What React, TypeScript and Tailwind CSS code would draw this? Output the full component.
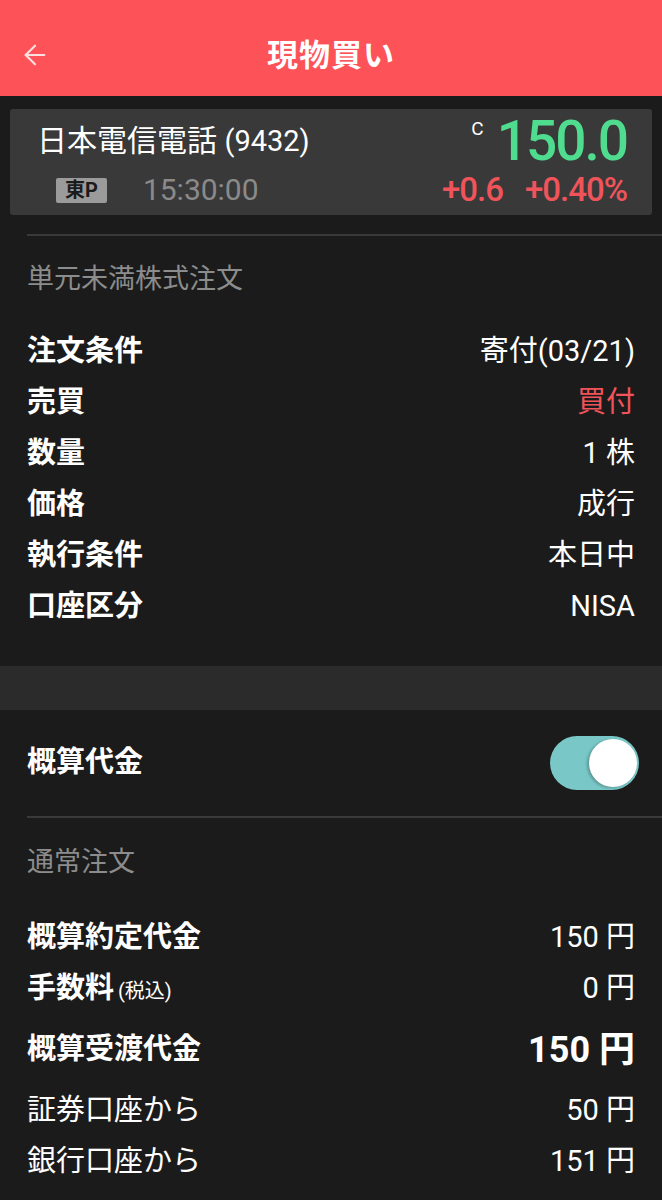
import { ArrowLeft } from 'lucide-react'

const font = { fontFamily: 'Roboto, "Noto Sans CJK JP", sans-serif' }

type Row = { label: string; value: string; red?: boolean }

const orderRows: Row[] = [
  { label: '注文条件', value: '寄付(03/21)' },
  { label: '売買', value: '買付', red: true },
  { label: '数量', value: '1 株' },
  { label: '価格', value: '成行' },
  { label: '執行条件', value: '本日中' },
  { label: '口座区分', value: 'NISA' },
]

function Toggle() {
  return (
    <div className="flex h-[54px] w-[89px] items-center justify-end rounded-full bg-[#79c8c7] pr-[2px]">
      <div className="h-[48px] w-[48px] rounded-full bg-white shadow-[-2px_1px_3px_rgba(0,0,0,0.25)]" />
    </div>
  )
}

export default function App() {
  return (
    <div
      className="min-h-[1200px] w-[662px] bg-[#1b1b1b] text-white"
      style={font}
    >
      <header className="relative flex h-[96px] items-center justify-center bg-[#fd5258]">
        <ArrowLeft className="absolute left-[19px] top-[39px] h-[32px] w-[32px] text-[#ffe0e0]" strokeWidth={1.6} />
        <h1 className="pt-[16px] text-[31px] font-bold tracking-[1px]">現物買い</h1>
      </header>

      <div className="px-[10px] pt-[13px]">
        <div className="rounded-[3px] bg-[#393939] pb-[8px] pl-[27px] pr-[25px] pt-[4px]">
          <div className="flex items-center justify-between">
            <p className="text-[30px] leading-none">
              日本電信電話 <span className="text-[29px]">(9432)</span>
            </p>
            <div className="flex items-start gap-[13px]">
              <span className="pt-[6px] text-[19px] leading-none">C</span>
              <span className="text-[55px] font-medium leading-[56px] tracking-[-2px] text-[#4fdc8f]">150.0</span>
            </div>
          </div>
          <div className="flex items-center justify-between pt-[4px]">
            <div className="flex items-center gap-[36px] pl-[19px]">
              <span className="rounded-[2px] bg-[#9b9b9b] px-[9px] text-[20px] font-bold leading-[25px] text-[#1b1b1b]">東P</span>
              <span className="text-[30px] leading-[34px] text-[#8a8a8a]">15:30:00</span>
            </div>
            <div className="flex gap-[22px] text-[33px] font-medium leading-[34px] tracking-[-1px] text-[#f0545a]">
              <span>+0.6</span>
              <span>+0.40%</span>
            </div>
          </div>
        </div>
      </div>

      <div className="ml-[27px] mt-[19px] border-t-[2px] border-[#3a3a3a]" />

      <section className="px-[27px] pb-[34px]">
        <p className="pt-[26px] text-[27px] leading-[34px] text-[#8c8c8c]">単元未満株式注文</p>
        <div className="mt-[30px] flex flex-col">
          {orderRows.map((r) => (
            <div key={r.label} className="flex h-[51px] items-center justify-between">
              <span className="text-[29px] font-bold">{r.label}</span>
              <span className={`text-[29px] ${r.red ? 'text-[#f0545a]' : 'text-white'}`}>{r.value}</span>
            </div>
          ))}
        </div>
      </section>

      <div className="h-[44px] bg-[#2b2b2b]" />

      <section className="flex h-[106px] items-center justify-between pl-[27px] pr-[23px]">
        <span className="text-[29px] font-bold">概算代金</span>
        <Toggle />
      </section>

      <div className="ml-[27px] border-t-[2px] border-[#3a3a3a]" />

      <section className="px-[27px]">
        <p className="pt-[27px] text-[27px] leading-[34px] text-[#8c8c8c]">通常注文</p>
        <div className="mt-[33px] flex h-[51px] items-center justify-between">
          <span className="text-[29px] font-bold">概算約定代金</span>
          <span className="text-[29px]">150 円</span>
        </div>
        <div className="flex h-[51px] items-center justify-between">
          <span className="text-[29px] font-bold">
            手数料<span className="ml-[4px] text-[20px] font-normal">(税込)</span>
          </span>
          <span className="text-[29px]">0 円</span>
        </div>
        <div className="flex h-[71px] items-center justify-between">
          <span className="text-[29px] font-bold">概算受渡代金</span>
          <span className="text-[36px] font-bold">150 円</span>
        </div>
        <div className="flex h-[51px] items-center justify-between">
          <span className="text-[29px]">証券口座から</span>
          <span className="text-[29px]">50 円</span>
        </div>
        <div className="flex h-[51px] items-center justify-between">
          <span className="text-[29px]">銀行口座から</span>
          <span className="text-[29px]">151 円</span>
        </div>
      </section>
    </div>
  )
}
